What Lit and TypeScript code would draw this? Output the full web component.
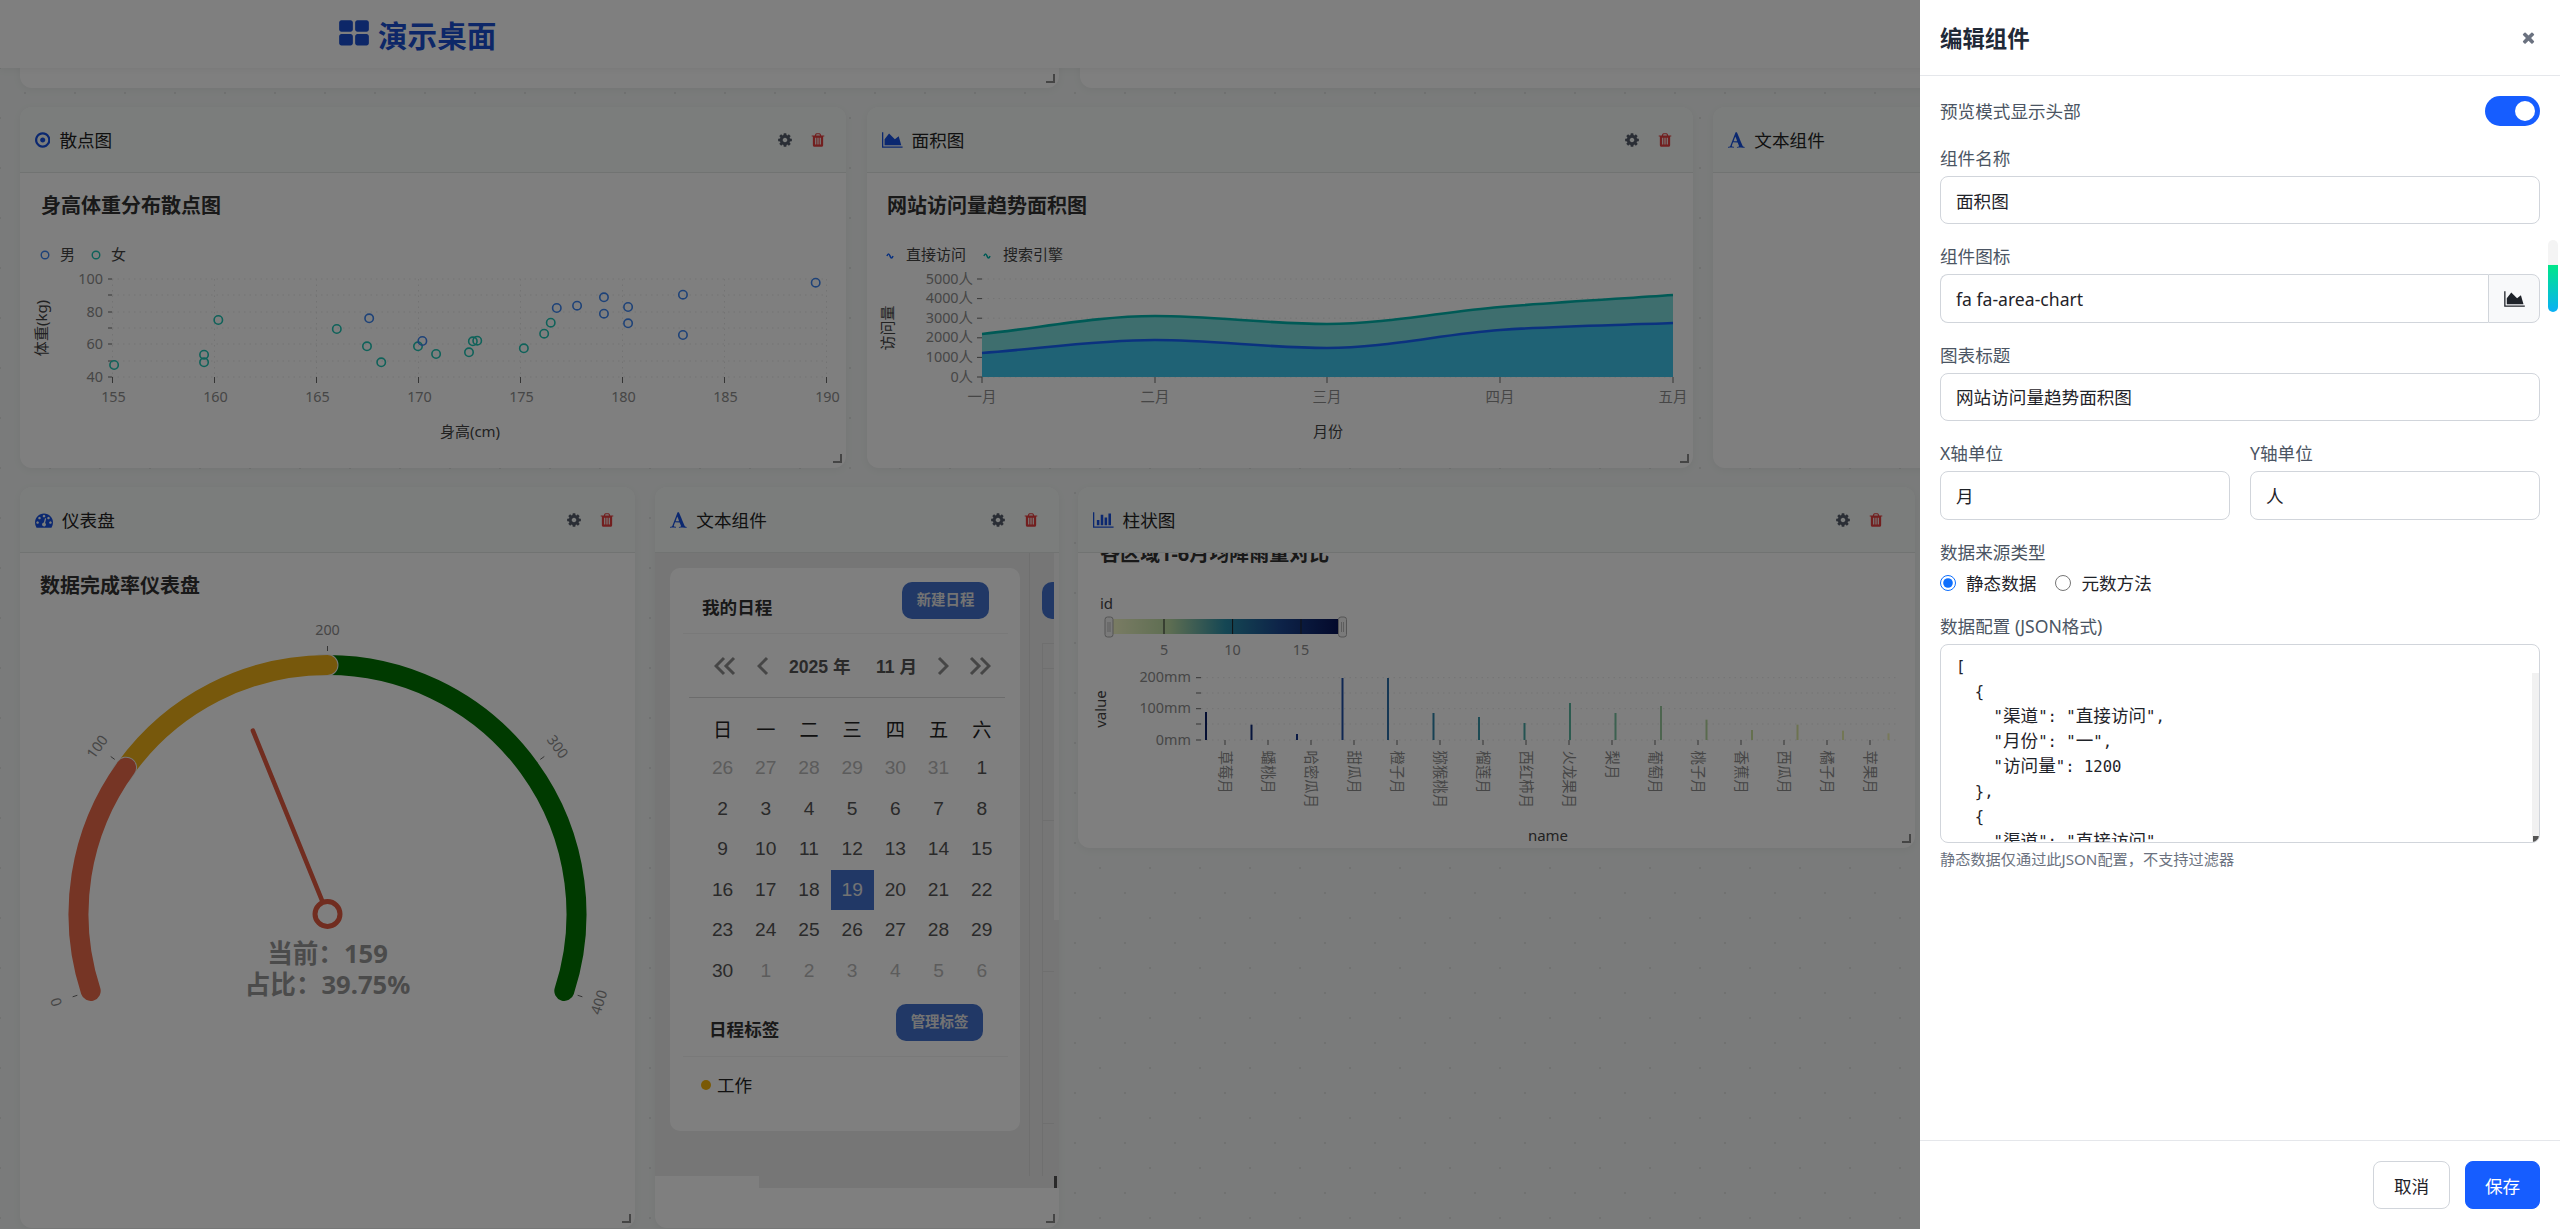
import { LitElement, html, css, svg } from 'lit'
import { customElement } from 'lit/decorators.js'

const ICONS: Record<string, [string, string]> = {
  cog: ['0 0 1792 1792', 'M1152 896q0-106-75-181t-181-75-181 75-75 181 75 181 181 75 181-75 75-181zm512-109v222q0 12-8 23t-20 13l-185 28q-19 54-39 91 35 50 107 138 10 12 10 25t-9 23q-27 37-99 108t-94 71q-12 0-26-9l-138-108q-44 23-91 38-16 136-29 186-7 28-36 28h-222q-14 0-24.5-8.5t-11.5-21.5l-28-184q-49-16-90-37l-141 107q-10 9-25 9-14 0-25-11-126-114-165-168-7-10-7-23 0-12 8-23 15-21 51-66.5t54-70.5q-27-50-41-99l-183-27q-13-2-21-12.5t-8-23.5v-222q0-12 8-23t19-13l186-28q14-46 39-92-40-57-107-138-10-12-10-24 0-10 9-23 26-36 98.5-107.5t94.5-71.5q13 0 26 10l138 107q44-23 91-38 16-136 29-186 7-28 36-28h222q14 0 24.5 8.5t11.5 21.5l28 184q49 16 90 37l142-107q9-9 24-9 13 0 25 10 129 119 165 170 7 8 7 22 0 12-8 23-15 21-51 66.5t-54 70.5q26 50 41 98l183 28q13 2 21 12.5t8 23.5z'],
  trash: ['0 0 1792 1792', 'M704 1376v-704q0-14-9-23t-23-9h-64q-14 0-23 9t-9 23v704q0 14 9 23t23 9h64q14 0 23-9t9-23zm256 0v-704q0-14-9-23t-23-9h-64q-14 0-23 9t-9 23v704q0 14 9 23t23 9h64q14 0 23-9t9-23zm256 0v-704q0-14-9-23t-23-9h-64q-14 0-23 9t-9 23v704q0 14 9 23t23 9h64q14 0 23-9t9-23zm-544-992h448l-48-117q-7-9-17-11h-317q-10 2-17 11zm928 32v64q0 14-9 23t-23 9h-96v948q0 83-47 143.5t-113 60.5h-832q-66 0-113-58.5t-47-141.5v-952h-96q-14 0-23-9t-9-23v-64q0-14 9-23t23-9h309l70-167q15-37 54-63t79-26h320q40 0 79 26t54 63l70 167h309q14 0 23 9t9 23z'],
  times: ['0 0 1792 1792', 'M1490 1322q0 40-28 68l-136 136q-28 28-68 28t-68-28l-294-294-294 294q-28 28-68 28t-68-28l-136-136q-28-28-28-68t28-68l294-294-294-294q-28-28-28-68t28-68l136-136q28-28 68-28t68 28l294 294 294-294q28-28 68-28t68 28l136 136q28 28 28 68t-28 68l-294 294 294 294q28 28 28 68z'],
  grid: ['0 0 1792 1792', 'M832 1024v384q0 52-38 90t-90 38h-512q-52 0-90-38t-38-90v-384q0-52 38-90t90-38h512q52 0 90 38t38 90zm0-768v384q0 52-38 90t-90 38h-512q-52 0-90-38t-38-90v-384q0-52 38-90t90-38h512q52 0 90 38t38 90zm896 768v384q0 52-38 90t-90 38h-512q-52 0-90-38t-38-90v-384q0-52 38-90t90-38h512q52 0 90 38t38 90zm0-768v384q0 52-38 90t-90 38h-512q-52 0-90-38t-38-90v-384q0-52 38-90t90-38h512q52 0 90 38t38 90z'],
  area: ['0 0 2048 1792', 'M2048 1536v128h-2048v-1536h128v1408h1920zm-384-1024l256 896h-1664v-576l448-576 576 576z'],
  bar: ['0 0 2048 1792', 'M640 896v512h-256v-512h256zm384-512v1024h-256v-1024h256zm1024 1152v128h-2048v-1536h128v1408h1920zm-640-896v768h-256v-768h256zm384-384v1152h-256v-1152h256z'],
  gauge: ['0 0 1792 1792', 'M384 1152q0-53-37.5-90.5t-90.5-37.5-90.5 37.5-37.5 90.5 37.5 90.5 90.5 37.5 90.5-37.5 37.5-90.5zm192-448q0-53-37.5-90.5t-90.5-37.5-90.5 37.5-37.5 90.5 37.5 90.5 90.5 37.5 90.5-37.5 37.5-90.5zm428 481l101-382q6-26-7.5-48.5t-38.5-29.5-48 6.5-30 39.5l-101 382q-60 5-107 43.5t-63 98.5q-20 77 20 146t117 89 146-20 89-117q16-60-6-117t-72-91zm660-33q0-53-37.5-90.5t-90.5-37.5-90.5 37.5-37.5 90.5 37.5 90.5 90.5 37.5 90.5-37.5 37.5-90.5zm-640-640q0-53-37.5-90.5t-90.5-37.5-90.5 37.5-37.5 90.5 37.5 90.5 90.5 37.5 90.5-37.5 37.5-90.5zm448 192q0-53-37.5-90.5t-90.5-37.5-90.5 37.5-37.5 90.5 37.5 90.5 90.5 37.5 90.5-37.5 37.5-90.5zm320 448q0 261-141 483-19 29-54 29h-1402q-35 0-54-29-141-221-141-483 0-182 71-348t191-286 286-191 348-71 348 71 286 191 191 286 71 348z'],
  dot: ['128 0 1536 1792', 'M1152 896q0 106-75 181t-181 75-181-75-75-181 75-181 181-75 181 75 75 181zm-256-544q-148 0-273 73t-198 198-73 273 73 273 198 198 273 73 273-73 198-198 73-273-73-273-198-198-273-73zm768 544q0 209-103 385.5t-279.5 279.5-385.5 103-385.5-103-279.5-279.5-103-385.5 103-385.5 279.5-279.5 385.5-103 385.5 103 279.5 279.5 103 385.5z'],
  font: ['64 0 1728 1792', 'M789 559l-170 450q33 0 136.5 2t160.5 2q19 0 57-2-87-253-184-452zm-725 1105l2-79q23-7 56-12.5t57-10.5 49.5-14.5 44.5-29 31-50.5l237-616 280-724h128q8 14 11 21l205 480q33 78 106 257.5t114 274.5q15 34 58 144.5t72 168.5q20 45 35 57 19 15 88 29.5t84 20.5q6 38 6 57 0 4-.5 13t-.5 13q-63 0-190-8t-191-8q-76 0-215 7t-178 8q0-43 4-78l131-28q1 0 12.5-2.5t15.5-3.5 14.5-4.5 15-6.5 11-8 9-11 2.5-14q0-16-31-96.5t-72-177.5-42-100l-450-2q-26 58-76.5 195.5t-50.5 162.5q0 22 14 37.5t43.5 24.5 49.5 13.5 58.5 8.5 40.5 4q1 19 1 58 0 9-2 27-58 0-174.5-10t-174.5-10q-8 0-26.5 4t-21.5 4q-80 14-188 14z']
}

function icon(name: string, height?: number) {
  const [box, d] = ICONS[name]
  const parts = box.split(' ').map(Number)
  // width follows the glyph, as it would with an icon font
  const size = height ? `width:${height * parts[2] / parts[3]}px;height:${height}px` : ''
  return html`<svg class="ico" style=${size} viewBox=${box}><path d=${d}></path></svg>`
}

function chevrons(dir: 'l' | 'r', double: boolean) {
  const one = dir === 'l' ? 'M10 2 L2 10 L10 18' : 'M2 2 L10 10 L2 18'
  const two = dir === 'l' ? 'M20 2 L12 10 L20 18' : 'M12 2 L20 10 L12 18'
  return html`<svg class="chev ${double ? 'dbl' : ''}" viewBox="0 0 ${double ? 22 : 12} 20">
    <path d=${one}></path>${double ? svg`<path d=${two}></path>` : ''}
  </svg>`
}

const AXIS = '#6b6b6b'

// every chart svg uses page coordinates as its viewBox, the numbers come straight from the layout
function hLine(x1: number, x2: number, y: number) {
  return svg`<line x1=${x1} x2=${x2} y1=${y} y2=${y} stroke="#e6e6e6" stroke-dasharray="1.5 4"></line>`
}

function tick(x1: number, y1: number, x2: number, y2: number) {
  return svg`<line x1=${x1} y1=${y1} x2=${x2} y2=${y2} stroke=${AXIS}></line>`
}

function axisText(x: number, y: number, t: string, anchor = 'middle') {
  return svg`<text class="ax" x=${x} y=${y} text-anchor=${anchor} dominant-baseline="central">${t}</text>`
}

function vTitle(x: number, y: number, t: string) {
  return svg`<text class="lb" transform="translate(${x} ${y}) rotate(-90)" text-anchor="middle" dominant-baseline="central">${t}</text>`
}

function scatterChart() {
  const male = [[673, 955], [770, 1023], [1015, 924], [1052, 917], [1101, 892], [1101, 941], [1145, 921], [1145, 970], [1245, 884], [1245, 1005], [1487, 848]]
  const female = [[398, 960], [372, 1064], [372, 1087], [208, 1095], [614, 987], [669, 1039], [695, 1087], [762, 1039], [795, 1062], [855, 1057], [862, 1024], [870, 1022], [955, 1045], [992, 1001], [1004, 968]]
  const xs = [155, 160, 165, 170, 175, 180, 185, 190]
  const pt = (p: number[], c: string) => svg`<circle cx=${p[0] / 1.823} cy=${p[1] / 3} r="4.2" fill="none" stroke=${c} stroke-width="1.6"></circle>`
  return html`<svg class="chart" viewBox="20 173 826 295">
    <text class="ttl" x="41" y="205" dominant-baseline="central">身高体重分布散点图</text>
    <circle cx="45" cy="255" r="3.8" fill="none" stroke="#3d85f0" stroke-width="1.4"></circle>
    <text class="lb" x="60" y="254" dominant-baseline="central">男</text>
    <circle cx="96" cy="255" r="3.8" fill="none" stroke="#1fc4b4" stroke-width="1.4"></circle>
    <text class="lb" x="111" y="254" dominant-baseline="central">女</text>
    ${[279, 295, 312, 328, 344, 361, 377].map((y, i) => svg`${hLine(112, 826, y)}${tick(108, y, 112, y)}${i % 2 === 0 ? axisText(103, y - 1, String(100 - i * 10), 'end') : ''}`)}
    ${xs.map((v, i) => {
      const x = 112.5 + i * 102
      return svg`<line x1=${x} x2=${x} y1="279" y2="377" stroke="#e6e6e6" stroke-dasharray="1.5 4"></line>${tick(x, 377, x, 383)}${axisText(x + 1, 396, String(v))}`
    })}
    ${vTitle(41, 328, '体重(kg)')}
    <text class="lb" x="470" y="431" text-anchor="middle" dominant-baseline="central">身高(cm)</text>
    ${female.map(p => pt(p, '#1fc4b4'))}
    ${male.map(p => pt(p, '#3d85f0'))}
  </svg>`
}

function monotonePath(xs: number[], ys: number[]) {
  const n = xs.length
  const slope = (i: number) => (ys[i + 1] - ys[i]) / (xs[i + 1] - xs[i])
  const m = xs.map((_, i) => {
    if (i === 0) return slope(0)
    if (i === n - 1) return slope(n - 2)
    const a = slope(i - 1)
    const b = slope(i)
    return a * b <= 0 ? 0 : (a + b) / 2
  })
  let d = `M${xs[0]} ${ys[0]}`
  for (let i = 1; i < n; i++) {
    const h = (xs[i] - xs[i - 1]) / 3
    d += ` C${xs[i - 1] + h} ${ys[i - 1] + m[i - 1] * h} ${xs[i] - h} ${ys[i] - m[i] * h} ${xs[i]} ${ys[i]}`
  }
  return d
}

function areaChart() {
  const xs = [982, 1155, 1327, 1500, 1673]
  const months = ['一月', '二月', '三月', '四月', '五月']
  const top = monotonePath(xs, [334, 316, 324, 307, 295])
  const low = monotonePath(xs, [353, 340, 348, 330, 323])
  return html`<svg class="chart" viewBox="867 173 826 295">
    <text class="ttl" x="887" y="205" dominant-baseline="central">网站访问量趋势面积图</text>
    <path d="M887 256 q1.5 -4 3 0 t3 0" fill="none" stroke="#1664ff" stroke-width="1.6"></path>
    <text class="lb" x="906" y="254" dominant-baseline="central">直接访问</text>
    <path d="M984 256 q1.5 -4 3 0 t3 0" fill="none" stroke="#00b5ac" stroke-width="1.6"></path>
    <text class="lb" x="1003" y="254" dominant-baseline="central">搜索引擎</text>
    ${['5000人', '4000人', '3000人', '2000人', '1000人', '0人'].map((t, i) => {
      const y = 279 + i * 19.6
      return svg`${hLine(982, 1673, y)}${tick(977, y, 982, y)}${axisText(973, y - 1, t, 'end')}`
    })}
    <path d="${top} L1673 377 L982 377 Z" fill="#7cdcdc"></path>
    <path d="${low} L1673 377 L982 377 Z" fill="#3fc4ea"></path>
    <path d=${top} fill="none" stroke="#00b5ac" stroke-width="2.6"></path>
    <path d=${low} fill="none" stroke="#1664ff" stroke-width="2.6"></path>
    ${xs.map((x, i) => svg`${tick(x, 377, x, 383)}${axisText(x, 396, months[i])}`)}
    ${vTitle(887, 328, '访问量')}
    <text class="lb" x="1328" y="431" text-anchor="middle" dominant-baseline="central">月份</text>
  </svg>`
}

function gaugeChart() {
  const cx = 327.5
  const cy = 914
  const R = 249
  const at = (deg: number, r: number) => [cx + r * Math.cos(deg * Math.PI / 180), cy + r * Math.sin(deg * Math.PI / 180)]
  const arc = (a: number, b: number) => {
    const [x1, y1] = at(a, R)
    const [x2, y2] = at(b, R)
    return `M${x1} ${y1} A${R} ${R} 0 ${b - a > 180 ? 1 : 0} 1 ${x2} ${y2}`
  }
  const ang = (v: number) => -198 + v / 400 * 216
  const seg = (a: number, b: number, c: string, cap: string) => svg`<path d=${arc(a, b)} fill="none" stroke=${c} stroke-width="20" stroke-linecap=${cap}></path>`
  const edge = (b: number) => svg`<path d=${arc(b - 1.5, b)} fill="none" stroke="#f2f2f2" stroke-width="22" stroke-linecap="round"></path>`
  const [nx, ny] = at(ang(159), 198)
  const [tx, ty] = at(ang(159), 13)
  return html`<svg class="chart" viewBox="20 553 615 675">
    <text class="ttl" x="40" y="585" dominant-baseline="central">数据完成率仪表盘</text>
    ${seg(ang(200), ang(400), '#007400', 'round')}
    ${edge(ang(200))}
    ${seg(ang(100), ang(200), '#efb018', 'round')}
    ${edge(ang(100))}
    ${seg(ang(0), ang(100), '#ec6a4a', 'round')}
    ${[0, 100, 200, 300, 400].map(v => {
      const a = ang(v)
      const [x1, y1] = at(a, 263)
      const [x2, y2] = at(a, 268)
      const [lx, ly] = at(a, 285)
      // labels stay readable, so the two lowest ones flip over
      let rot = a + 90
      if (rot > 90) rot -= 180
      if (rot < -90) rot += 180
      return svg`${tick(x1, y1, x2, y2)}<text class="ax" transform="translate(${lx} ${ly}) rotate(${rot})" text-anchor="middle" dominant-baseline="central">${v}</text>`
    })}
    <line x1=${tx} y1=${ty} x2=${nx} y2=${ny} stroke="#e25a40" stroke-width="4.5" stroke-linecap="round"></line>
    <circle cx=${cx} cy=${cy} r="12.5" fill="#fff" stroke="#e25a40" stroke-width="5"></circle>
    <text class="gv" x=${cx} y="953" text-anchor="middle" dominant-baseline="central">当前：159</text>
    <text class="gv" x=${cx} y="984" text-anchor="middle" dominant-baseline="central">占比：39.75%</text>
  </svg>`
}

function barChart() {
  const names = ['草莓月', '蟠桃月', '哈密瓜月', '甜瓜月', '橙子月', '猕猴桃月', '榴莲月', '西红柿月', '火龙果月', '梨月', '葡萄月', '桃子月', '香蕉月', '西瓜月', '橘子月', '苹果月']
  const tops = [696, 734, 762, 594, 594, 699, 711, 729, 669, 699, 678, 719, 750, 734, 752, 760]
  const colors = ['#0a1f66', '#0f2a7a', '#14358c', '#1f4fa6', '#2a6fa9', '#2f82a8', '#3a97a8', '#48a7a4', '#5ab6a0', '#79c2a0', '#9acb9e', '#b5d69e', '#cbe09e', '#dbe7a2', '#e7eeaa', '#f0f3b4']
  return html`<svg class="chart" viewBox="1078 553 837 295">
    <text class="ttl" x="1100" y="553" dominant-baseline="central">各区域1-6月均降雨量对比</text>
    <text class="lb" x="1100" y="603" dominant-baseline="central">id</text>
    <defs><linearGradient id="ylgn"><stop offset="0" stop-color="#f4f8c8"></stop><stop offset="0.25" stop-color="#bcdca4"></stop><stop offset="0.5" stop-color="#2a8ea8"></stop><stop offset="0.75" stop-color="#1a4590"></stop><stop offset="1" stop-color="#081458"></stop></linearGradient></defs>
    <rect x="1113" y="619" width="225" height="15" fill="url(#ylgn)"></rect>
    ${[1164, 1232.6, 1301].map((x, i) => svg`<line x1=${x} x2=${x} y1="619" y2="634" stroke="#222"></line>${axisText(x, 649, String((i + 1) * 5))}`)}
    ${[1109, 1342.5].map(x => svg`<rect x=${x - 4} y="617" width="8" height="20" rx="2.5" fill="#f4f4f4" stroke="#aaa" stroke-width="1"></rect><line x1=${x - 1} x2=${x - 1} y1="622" y2="632" stroke="#bbb"></line><line x1=${x + 1} x2=${x + 1} y1="622" y2="632" stroke="#bbb"></line>`)}
    ${[677.7, 693, 708.7, 724, 740].map((y, i) => svg`${hLine(1201, 1897, y)}${tick(1196, y, 1201, y)}${i % 2 === 0 ? axisText(1191, y - 1, `${200 - i * 50}mm`, 'end') : ''}`)}
    ${tops.map((t, i) => {
      const x = 1206 + i * 45.5
      const y = 480 + t / 3
      return svg`<rect x=${x - 1} y=${y} width="2" height=${740 - y} fill=${colors[i]}></rect>`
    })}
    ${names.map((n, i) => {
      const x = 1225 + i * 43
      return svg`${tick(x, 740, x, 745)}<text class="ax" transform="translate(${x} 750.5) rotate(90)" dominant-baseline="central">${n}</text>`
    })}
    ${vTitle(1100, 709, 'value')}
    <text class="lb" x="1548" y="835" text-anchor="middle" dominant-baseline="central">name</text>
  </svg>`
}

const WEEK = ['日', '一', '二', '三', '四', '五', '六']
const DAYS: [number, boolean][] = [
  ...[26, 27, 28, 29, 30, 31].map(d => [d, true] as [number, boolean]),
  ...Array.from({ length: 30 }, (_, i) => [i + 1, false] as [number, boolean]),
  ...[1, 2, 3, 4, 5, 6].map(d => [d, true] as [number, boolean])
]

function scheduleBody() {
  return html`<div class="sched">
    <div class="sched-left">
      <div class="cal">
        <div class="cal-head"><b>我的日程</b><span class="pill">新建日程</span></div>
        <div class="cal-nav">
          ${chevrons('l', true)}${chevrons('l', false)}
          <b class="ym">2025 年</b><b class="ym mon">11 月</b>
          ${chevrons('r', false)}${chevrons('r', true)}
        </div>
        <div class="cal-grid">
          ${WEEK.map(w => html`<div class="wk">${w}</div>`)}
          ${DAYS.map(([d, off]) => html`<div class="day ${off ? 'off' : ''} ${!off && d === 19 ? 'today' : ''}">${d}</div>`)}
        </div>
        <div class="tag-head"><b>日程标签</b><span class="pill">管理标签</span></div>
        <div class="tag"><i></i>工作</div>
      </div>
    </div>
    <div class="sched-right">
      <div class="pill clip"></div>
      <div class="week-table">
        ${[25, 152, 151, 152, 53].map(h => html`<div style="height:${h}px"></div>`)}
      </div>
    </div>
    <div class="sched-bar"></div>
  </div>
  <div class="hbar"><div class="hthumb"></div><div class="hcorner"></div></div>`
}

interface Widget {
  name: string
  icon: string
  left: number
  top: number
  width: number
  height: number
  toolInset?: number
  body?: () => unknown
}

const WIDGETS: Widget[] = [
  { name: '', icon: '', left: 20, top: -100, width: 1039, height: 188 },
  { name: '', icon: '', left: 1080, top: -100, width: 900, height: 188 },
  { name: '散点图', icon: 'dot', left: 20, top: 107, width: 826, height: 361, body: scatterChart },
  { name: '面积图', icon: 'area', left: 867, top: 107, width: 826, height: 361, body: areaChart },
  { name: '文本组件', icon: 'font', left: 1713, top: 107, width: 400, height: 361 },
  { name: '仪表盘', icon: 'gauge', left: 20, top: 487, width: 615, height: 741, body: gaugeChart },
  { name: '文本组件', icon: 'font', left: 655, top: 487, width: 404, height: 741, body: scheduleBody },
  { name: '柱状图', icon: 'bar', left: 1078, top: 487, width: 837, height: 361, toolInset: 31, body: barChart }
]

const JSON_TEXT = `[
  {
    "渠道": "直接访问",
    "月份": "一",
    "访问量": 1200
  },
  {
    "渠道": "直接访问"`

@customElement('app-root')
export class AppRoot extends LitElement {
  static styles = css`
    :host {
      display: block;
      position: relative;
      width: 2560px;
      height: 1229px;
      overflow: hidden;
      font-family: "Noto Sans", "Noto Sans CJK SC", sans-serif;
      font-size: 17.6px;
      color: #1f2329;
      background-color: #f4f7f6;
      background-image: radial-gradient(#e2e4e3 0.8px, transparent 1.2px), radial-gradient(#e2e4e3 0.8px, transparent 1.2px);
      background-size: 50px 50px;
      background-position: -25px -7px, 0 18px;
    }
    .ico { display: block; fill: currentColor; }
    .topbar {
      position: absolute;
      z-index: 2;
      left: 0;
      top: 0;
      width: 100%;
      height: 68px;
      background: #fff;
      box-shadow: 0 2px 8px rgba(0, 0, 0, 0.05);
      box-sizing: border-box;
      padding-left: 338px;
      display: flex;
      align-items: center;
      gap: 8px;
      color: #1a4fd0;
      font-size: 29.6px;
      font-weight: 700;
    }
    .topbar .ico { width: 32px; height: 32px; }
    .card {
      position: absolute;
      background: #fff;
      border-radius: 12px;
      box-shadow: 0 2px 8px rgba(0, 0, 0, 0.05);
      overflow: hidden;
      display: flex;
      flex-direction: column;
    }
    .card-head {
      flex: 0 0 66px;
      box-sizing: border-box;
      display: flex;
      align-items: center;
      gap: 9px;
      padding: 0 20px 0 15px;
      background: #f6faf8;
      border-bottom: 1px solid #e2e6e4;
    }
    .card-icon { color: #1750e0; }
    .card-name { flex: 1; color: #222; }
    .tools { display: flex; gap: 17px; align-items: center; }
    .tool { width: 16px; height: 16px; color: #555c6a; }
    .tool.del { color: #e53e3e; }
    .grip {
      position: absolute;
      right: 4px;
      bottom: 5px;
      width: 7px;
      height: 7px;
      border-right: 2px solid #8a8a8a;
      border-bottom: 2px solid #8a8a8a;
    }
    .chart { display: block; flex: 1; min-height: 0; width: 100%; }
    .chart text { font-family: "Noto Sans", "Noto Sans CJK SC", sans-serif; }
    .ttl { font-size: 20px; font-weight: 700; fill: #333; }
    .ax { font-size: 14.4px; fill: #8d8d8d; }
    .lb { font-size: 15px; fill: #444; }
    .gv { font-size: 25.6px; font-weight: 700; fill: #969696; }

    .sched { height: 623px; flex: none; display: flex; background: #ededed; overflow: hidden; }
    .sched-left { width: 374px; box-sizing: border-box; padding: 15px 0 0 15px; }
    .sched-right { width: 25px; box-sizing: border-box; border-left: 1px solid #dedede; padding: 29px 0 0 12px; overflow: hidden; }
    .sched-bar { width: 5px; height: 367px; background: #f8f8f8; }
    .cal {
      width: 350px;
      height: 563px;
      box-sizing: border-box;
      background: #fff;
      border-radius: 10px;
      padding: 14px 12px 0 13px;
      font-family: "Liberation Sans", "Noto Sans CJK SC", sans-serif;
    }
    .cal-head {
      display: flex;
      justify-content: space-between;
      height: 51px;
      padding: 0 19px;
      border-bottom: 1px solid #f2f2f2;
    }
    .cal-head b { padding-top: 12px; color: #333; }
    .pill {
      display: block;
      box-sizing: border-box;
      width: 87px;
      height: 37px;
      line-height: 36px;
      text-align: center;
      font-family: "Noto Sans", "Noto Sans CJK SC", sans-serif;
      font-size: 14.4px;
      font-weight: 700;
      color: #e6e6e6;
      background: #4271cd;
      border-radius: 10px;
    }
    .cal-nav {
      height: 64px;
      box-sizing: border-box;
      margin: 0 3px 0 6px;
      border-bottom: 1px solid #d8d8d8;
      display: flex;
      align-items: center;
      padding: 0 0 0 25px;
    }
    .chev { width: 12px; height: 20px; margin: 0 20px 0 21px; fill: none; stroke: #8c8c8c; stroke-width: 3; flex: none; }
    .chev.dbl { width: 22px; margin: 0; }
    .ym { font-size: 17.6px; color: #555; width: 61px; white-space: nowrap; flex: none; }
    .ym.mon { margin-left: 26px; width: 39px; }
    .cal-nav .ym.mon + .chev { margin: 0 20px 0 22px; }
    .cal-grid {
      display: grid;
      grid-template-columns: repeat(7, 43.2px);
      grid-template-rows: 35px;
      grid-auto-rows: 40.5px;
      margin: 15px 0 0 18px;
      font-size: 19.2px;
      text-align: center;
      line-height: 40.5px;
      color: #555;
    }
    .cal-grid .wk { color: #222; line-height: 35px; }
    .day.off { color: #b8b8b8; }
    .day.today { background: #4271cd; color: #e6e6e6; }
    .tag-head {
      display: flex;
      justify-content: space-between;
      height: 52px;
      margin-top: 13px;
      padding: 0 25px 0 26px;
      border-bottom: 1px solid #f2f2f2;
    }
    .tag-head b { padding-top: 12px; color: #333; }
    .tag { display: flex; align-items: center; gap: 6px; margin: 15px 0 0 18px; color: #222; font-family: "Noto Sans", "Noto Sans CJK SC", sans-serif; }
    .tag i { width: 10px; height: 10px; border-radius: 50%; background: #f5b30a; }
    .pill.clip { width: 100px; }
    .week-table { width: 100px; margin-top: 24px; border-left: 1px solid #dedede; }
    .week-table div { border-top: 1px solid #dedede; box-sizing: border-box; }
    .hbar { height: 12px; flex: none; display: flex; background: #ededed; }
    .hthumb { width: 104px; background: #fff; }
    .hcorner { width: 3px; margin-left: 295px; background: #555; }

    .mask { position: absolute; z-index: 5; inset: 0; background: rgba(0, 0, 0, 0.5); }
    .panel {
      position: absolute;
      z-index: 6;
      right: 0;
      top: 0;
      width: 640px;
      height: 100%;
      background: #fff;
      display: flex;
      flex-direction: column;
      color: #4b5563;
    }
    .panel-head {
      flex: 0 0 76px;
      box-sizing: border-box;
      border-bottom: 1px solid #e5e7eb;
      padding: 0 23px 0 20px;
      display: flex;
      align-items: center;
      justify-content: space-between;
    }
    .panel-head h3 { margin: 0; font-size: 22.4px; font-weight: 700; color: #1f2937; }
    .panel-head .ico { width: 17px; height: 17px; color: #6b7280; }
    .panel-body { flex: 1; padding: 20px; position: relative; }
    .row { margin-bottom: 20px; }
    .switch-row { display: flex; justify-content: space-between; align-items: center; height: 30px; }
    .switch-row span { padding-bottom: 2px; }
    .switch { width: 55px; height: 30px; border-radius: 15px; background: #165dff; position: relative; }
    .switch::after {
      content: "";
      position: absolute;
      right: 5px;
      top: 5px;
      width: 20px;
      height: 20px;
      border-radius: 50%;
      background: #fff;
    }
    label, .lab { display: block; line-height: 24.4px; margin-bottom: 5.6px; color: #4b5563; }
    .inp {
      display: block;
      box-sizing: border-box;
      width: 100%;
      height: 48.4px;
      padding: 0 15px;
      font: inherit;
      color: #1f2329;
      background: #fff;
      border: 1px solid #d1d5db;
      border-radius: 8px;
      outline: none;
    }
    .addon { display: flex; }
    .addon .inp { flex: 1; border-radius: 8px 0 0 8px; border-right: none; }
    .addon-box {
      width: 52px;
      box-sizing: border-box;
      border: 1px solid #d1d5db;
      border-radius: 0 8px 8px 0;
      background: #f8f9fa;
      display: flex;
      align-items: center;
      justify-content: center;
      color: #1f2329;
    }
    .addon-box .ico { width: 21px; height: 18px; }
    .two { display: grid; grid-template-columns: 290px 290px; gap: 20px; }
    .radios { display: flex; align-items: center; height: 26.4px; color: #1f2329; margin-bottom: 18px; }
    .radios label { display: flex; align-items: center; margin: 0 19px 0 0; line-height: 24.4px; color: #1f2329; }
    .radios input { width: 16px; height: 16px; margin: 0 10px 0 0; accent-color: #0d6efd; }
    .code {
      position: relative;
      height: 199px;
      box-sizing: border-box;
      border: 1px solid #d1d5db;
      border-radius: 8px;
      padding: 10px 15px;
      overflow: hidden;
      font-family: "DejaVu Sans Mono", "Noto Sans CJK SC", monospace;
      font-size: 15.6px;
      line-height: 25px;
      white-space: pre;
      color: #1f2329;
    }
    .code .cj { font-family: "Noto Sans CJK SC", sans-serif; font-size: 17.6px; line-height: 0; }
    .code-track { position: absolute; right: 0; top: 28px; bottom: 0; width: 7px; background: #f1f1f1; }
    .code-grip { position: absolute; right: 0; bottom: 0; width: 6px; height: 6px; background: #555; }
    .hint { margin-top: 5px; font-size: 15.2px; line-height: 22px; color: #6b7280; }
    .scroll {
      position: absolute;
      right: 2px;
      top: 164px;
      width: 10px;
      height: 72px;
      border-radius: 5px;
      background: linear-gradient(#f4f4f4 0, #f4f4f4 34%, #00e68a 35%, #0ab0f5 100%);
    }
    .panel-foot {
      flex: 0 0 89px;
      box-sizing: border-box;
      border-top: 1px solid #e5e7eb;
      padding: 20px 20px 0 0;
      display: flex;
      justify-content: flex-end;
      gap: 15px;
    }
    .btn {
      height: 48px;
      width: 77px;
      box-sizing: border-box;
      border: 1px solid #d1d5db;
      border-radius: 8px;
      background: #fff;
      color: #1f2329;
      font: inherit;
    }
    .btn.primary { width: 75px; background: #165dff; border-color: #165dff; color: #fff; }
  `

  private renderCard(w: Widget) {
    const pos = `left:${w.left}px;top:${w.top}px;width:${w.width}px;height:${w.height}px`
    return html`<div class="card" style=${pos}>
      ${w.name ? html`<div class="card-head" style=${w.toolInset ? `padding-right:${w.toolInset}px` : ''}>
        <div class="card-icon">${icon(w.icon, 18)}</div>
        <div class="card-name">${w.name}</div>
        <div class="tools"><div class="tool">${icon('cog')}</div><div class="tool del">${icon('trash')}</div></div>
      </div>` : ''}
      ${w.body ? w.body() : ''}
      <div class="grip"></div>
    </div>`
  }

  render() {
    return html`
      <div class="topbar">${icon('grid')}<span>演示桌面</span></div>
      ${WIDGETS.map(w => this.renderCard(w))}
      <div class="mask"></div>
      <aside class="panel">
        <div class="panel-head"><h3>编辑组件</h3>${icon('times')}</div>
        <div class="panel-body">
          <div class="row switch-row"><span>预览模式显示头部</span><div class="switch"></div></div>
          <div class="row"><label>组件名称</label><input class="inp" .value=${'面积图'} /></div>
          <div class="row"><label>组件图标</label>
            <div class="addon"><input class="inp" .value=${'fa fa-area-chart'} /><div class="addon-box">${icon('area')}</div></div>
          </div>
          <div class="row"><label>图表标题</label><input class="inp" .value=${'网站访问量趋势面积图'} /></div>
          <div class="row two">
            <div><label>X轴单位</label><input class="inp" .value=${'月'} /></div>
            <div><label>Y轴单位</label><input class="inp" .value=${'人'} /></div>
          </div>
          <div class="lab">数据来源类型</div>
          <div class="radios">
            <label><input type="radio" name="src" checked />静态数据</label>
            <label><input type="radio" name="src" />元数方法</label>
          </div>
          <div class="lab">数据配置 (JSON格式)</div>
          <div class="code">${JSON_TEXT.split(/([\u4e00-\u9fff]+)/).map((part, i) => i % 2 ? html`<span class="cj">${part}</span>` : part)}<div class="code-track"></div><div class="code-grip"></div></div>
          <div class="hint">静态数据仅通过此JSON配置，不支持过滤器</div>
          <div class="scroll"></div>
        </div>
        <div class="panel-foot"><button class="btn">取消</button><button class="btn primary">保存</button></div>
      </aside>
    `
  }
}

declare global {
  interface HTMLElementTagNameMap {
    'app-root': AppRoot
  }
}
